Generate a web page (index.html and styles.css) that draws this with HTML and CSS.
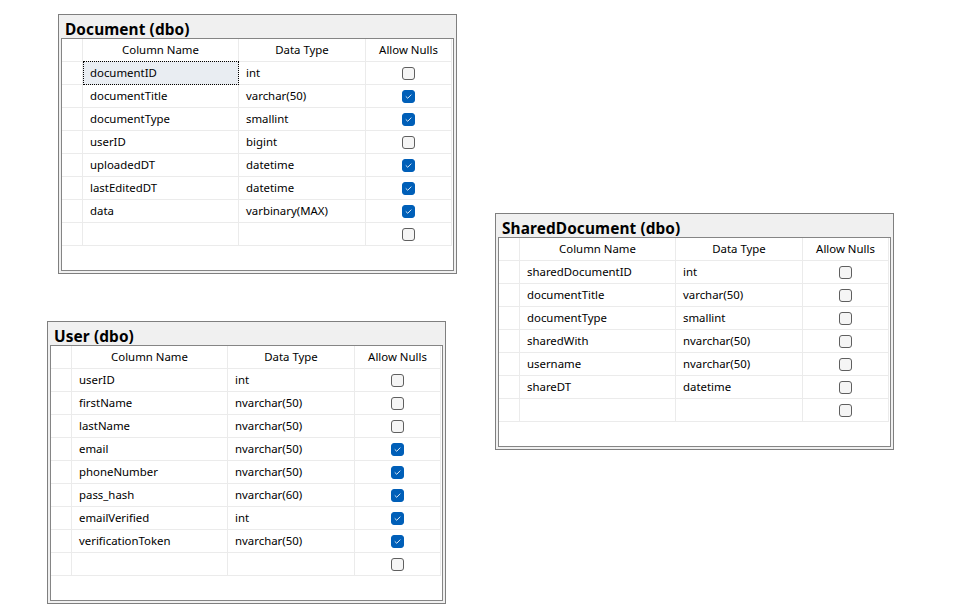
FILE: index.html
```html
<!DOCTYPE html>
<html>
<head>
<meta charset="utf-8">
<link rel="stylesheet" href="styles.css">
</head>
<body>
<div class="canvas">

  <div class="tbl tbl-doc">
    <div class="tbl-title">Document (dbo)</div>
    <div class="tbl-body">
      <div class="grid">
        <div class="cell rh"></div><div class="cell hd">Column Name</div><div class="cell hd">Data Type</div><div class="cell hd">Allow Nulls</div>
        <div class="cell rh"></div><div class="cell focus">documentID</div><div class="cell">int</div><div class="cell cb"><span class="chk"></span></div>
        <div class="cell rh"></div><div class="cell">documentTitle</div><div class="cell">varchar(50)</div><div class="cell cb"><span class="chk on"><svg viewBox="0 0 13 13"><path d="M3.6 6.7 L5.6 8.6 L9.5 4.6"/></svg></span></div>
        <div class="cell rh"></div><div class="cell">documentType</div><div class="cell">smallint</div><div class="cell cb"><span class="chk on"><svg viewBox="0 0 13 13"><path d="M3.6 6.7 L5.6 8.6 L9.5 4.6"/></svg></span></div>
        <div class="cell rh"></div><div class="cell">userID</div><div class="cell">bigint</div><div class="cell cb"><span class="chk"></span></div>
        <div class="cell rh"></div><div class="cell">uploadedDT</div><div class="cell">datetime</div><div class="cell cb"><span class="chk on"><svg viewBox="0 0 13 13"><path d="M3.6 6.7 L5.6 8.6 L9.5 4.6"/></svg></span></div>
        <div class="cell rh"></div><div class="cell">lastEditedDT</div><div class="cell">datetime</div><div class="cell cb"><span class="chk on"><svg viewBox="0 0 13 13"><path d="M3.6 6.7 L5.6 8.6 L9.5 4.6"/></svg></span></div>
        <div class="cell rh"></div><div class="cell">data</div><div class="cell">varbinary(MAX)</div><div class="cell cb"><span class="chk on"><svg viewBox="0 0 13 13"><path d="M3.6 6.7 L5.6 8.6 L9.5 4.6"/></svg></span></div>
        <div class="cell rh"></div><div class="cell"></div><div class="cell"></div><div class="cell cb"><span class="chk"></span></div>
      </div>
    </div>
  </div>

  <div class="tbl tbl-shared">
    <div class="tbl-title">SharedDocument (dbo)</div>
    <div class="tbl-body">
      <div class="grid">
        <div class="cell rh"></div><div class="cell hd">Column Name</div><div class="cell hd">Data Type</div><div class="cell hd">Allow Nulls</div>
        <div class="cell rh"></div><div class="cell">sharedDocumentID</div><div class="cell">int</div><div class="cell cb"><span class="chk"></span></div>
        <div class="cell rh"></div><div class="cell">documentTitle</div><div class="cell">varchar(50)</div><div class="cell cb"><span class="chk"></span></div>
        <div class="cell rh"></div><div class="cell">documentType</div><div class="cell">smallint</div><div class="cell cb"><span class="chk"></span></div>
        <div class="cell rh"></div><div class="cell">sharedWith</div><div class="cell">nvarchar(50)</div><div class="cell cb"><span class="chk"></span></div>
        <div class="cell rh"></div><div class="cell">username</div><div class="cell">nvarchar(50)</div><div class="cell cb"><span class="chk"></span></div>
        <div class="cell rh"></div><div class="cell">shareDT</div><div class="cell">datetime</div><div class="cell cb"><span class="chk"></span></div>
        <div class="cell rh"></div><div class="cell"></div><div class="cell"></div><div class="cell cb"><span class="chk"></span></div>
      </div>
    </div>
  </div>

  <div class="tbl tbl-user">
    <div class="tbl-title">User (dbo)</div>
    <div class="tbl-body">
      <div class="grid">
        <div class="cell rh"></div><div class="cell hd">Column Name</div><div class="cell hd">Data Type</div><div class="cell hd">Allow Nulls</div>
        <div class="cell rh"></div><div class="cell">userID</div><div class="cell">int</div><div class="cell cb"><span class="chk"></span></div>
        <div class="cell rh"></div><div class="cell">firstName</div><div class="cell">nvarchar(50)</div><div class="cell cb"><span class="chk"></span></div>
        <div class="cell rh"></div><div class="cell">lastName</div><div class="cell">nvarchar(50)</div><div class="cell cb"><span class="chk"></span></div>
        <div class="cell rh"></div><div class="cell">email</div><div class="cell">nvarchar(50)</div><div class="cell cb"><span class="chk on"><svg viewBox="0 0 13 13"><path d="M3.6 6.7 L5.6 8.6 L9.5 4.6"/></svg></span></div>
        <div class="cell rh"></div><div class="cell">phoneNumber</div><div class="cell">nvarchar(50)</div><div class="cell cb"><span class="chk on"><svg viewBox="0 0 13 13"><path d="M3.6 6.7 L5.6 8.6 L9.5 4.6"/></svg></span></div>
        <div class="cell rh"></div><div class="cell">pass_hash</div><div class="cell">nvarchar(60)</div><div class="cell cb"><span class="chk on"><svg viewBox="0 0 13 13"><path d="M3.6 6.7 L5.6 8.6 L9.5 4.6"/></svg></span></div>
        <div class="cell rh"></div><div class="cell">emailVerified</div><div class="cell">int</div><div class="cell cb"><span class="chk on"><svg viewBox="0 0 13 13"><path d="M3.6 6.7 L5.6 8.6 L9.5 4.6"/></svg></span></div>
        <div class="cell rh"></div><div class="cell">verificationToken</div><div class="cell">nvarchar(50)</div><div class="cell cb"><span class="chk on"><svg viewBox="0 0 13 13"><path d="M3.6 6.7 L5.6 8.6 L9.5 4.6"/></svg></span></div>
        <div class="cell rh"></div><div class="cell"></div><div class="cell"></div><div class="cell cb"><span class="chk"></span></div>
      </div>
    </div>
  </div>

</div>
</body>
</html>
```

FILE: styles.css
```css
html, body {
  margin: 0;
  padding: 0;
  background: #ffffff;
}

body {
  font-family: "Noto Sans", "Liberation Sans", sans-serif;
  color: #000;
}

.canvas {
  position: relative;
  width: 971px;
  height: 614px;
  overflow: hidden;
}

.tbl {
  position: absolute;
  width: 399px;
  box-sizing: border-box;
  border: 1px solid #7f7f7f;
  background: #f0f0f0;
  padding: 0 2px 2px 2px;
}

.tbl-doc { left: 58px; top: 14px; }
.tbl-user { left: 47px; top: 321px; }
.tbl-shared { left: 495px; top: 213px; }

.tbl-title {
  height: 23px;
  line-height: 30px;
  padding-left: 4px;
  font-size: 15.4px;
  font-weight: bold;
  white-space: nowrap;
  letter-spacing: 0.1px;
}

.tbl-body {
  border: 1px solid #858585;
  background: #ffffff;
  padding-bottom: 24px;
}

.grid {
  display: grid;
  grid-template-columns: 21px 156px 127px 86px;
}

.cell {
  height: 23px;
  box-sizing: border-box;
  border-right: 1px solid #ebebeb;
  border-bottom: 1px solid #ebebeb;
  padding-left: 7px;
  font-size: 11.4px;
  line-height: 22px;
  white-space: nowrap;
  overflow: hidden;
}

.cell.rh {
  padding-left: 0;
}

.cell.hd {
  padding-left: 0;
  text-align: center;
}

.cell.focus {
  position: relative;
  overflow: visible;
  background: #e9edf2;
}

.cell.focus::after {
  content: "";
  position: absolute;
  left: 0;
  top: -1px;
  right: -1px;
  bottom: -1px;
  border: 1px dotted #000;
}

.cell.cb {
  padding-left: 0;
  display: flex;
  align-items: center;
  justify-content: center;
}

.chk {
  display: block;
  width: 13px;
  height: 13px;
  box-sizing: border-box;
  border: 1px solid #5f5f5f;
  border-radius: 3px;
  background: #f5f5f5;
}

.chk.on {
  border-color: #005fb8;
  background: #005fb8;
}

.chk svg {
  display: block;
  width: 11px;
  height: 11px;
}

.chk svg path {
  fill: none;
  stroke: #ffffff;
  stroke-width: 1;
  stroke-linecap: round;
  stroke-linejoin: round;
}
```
